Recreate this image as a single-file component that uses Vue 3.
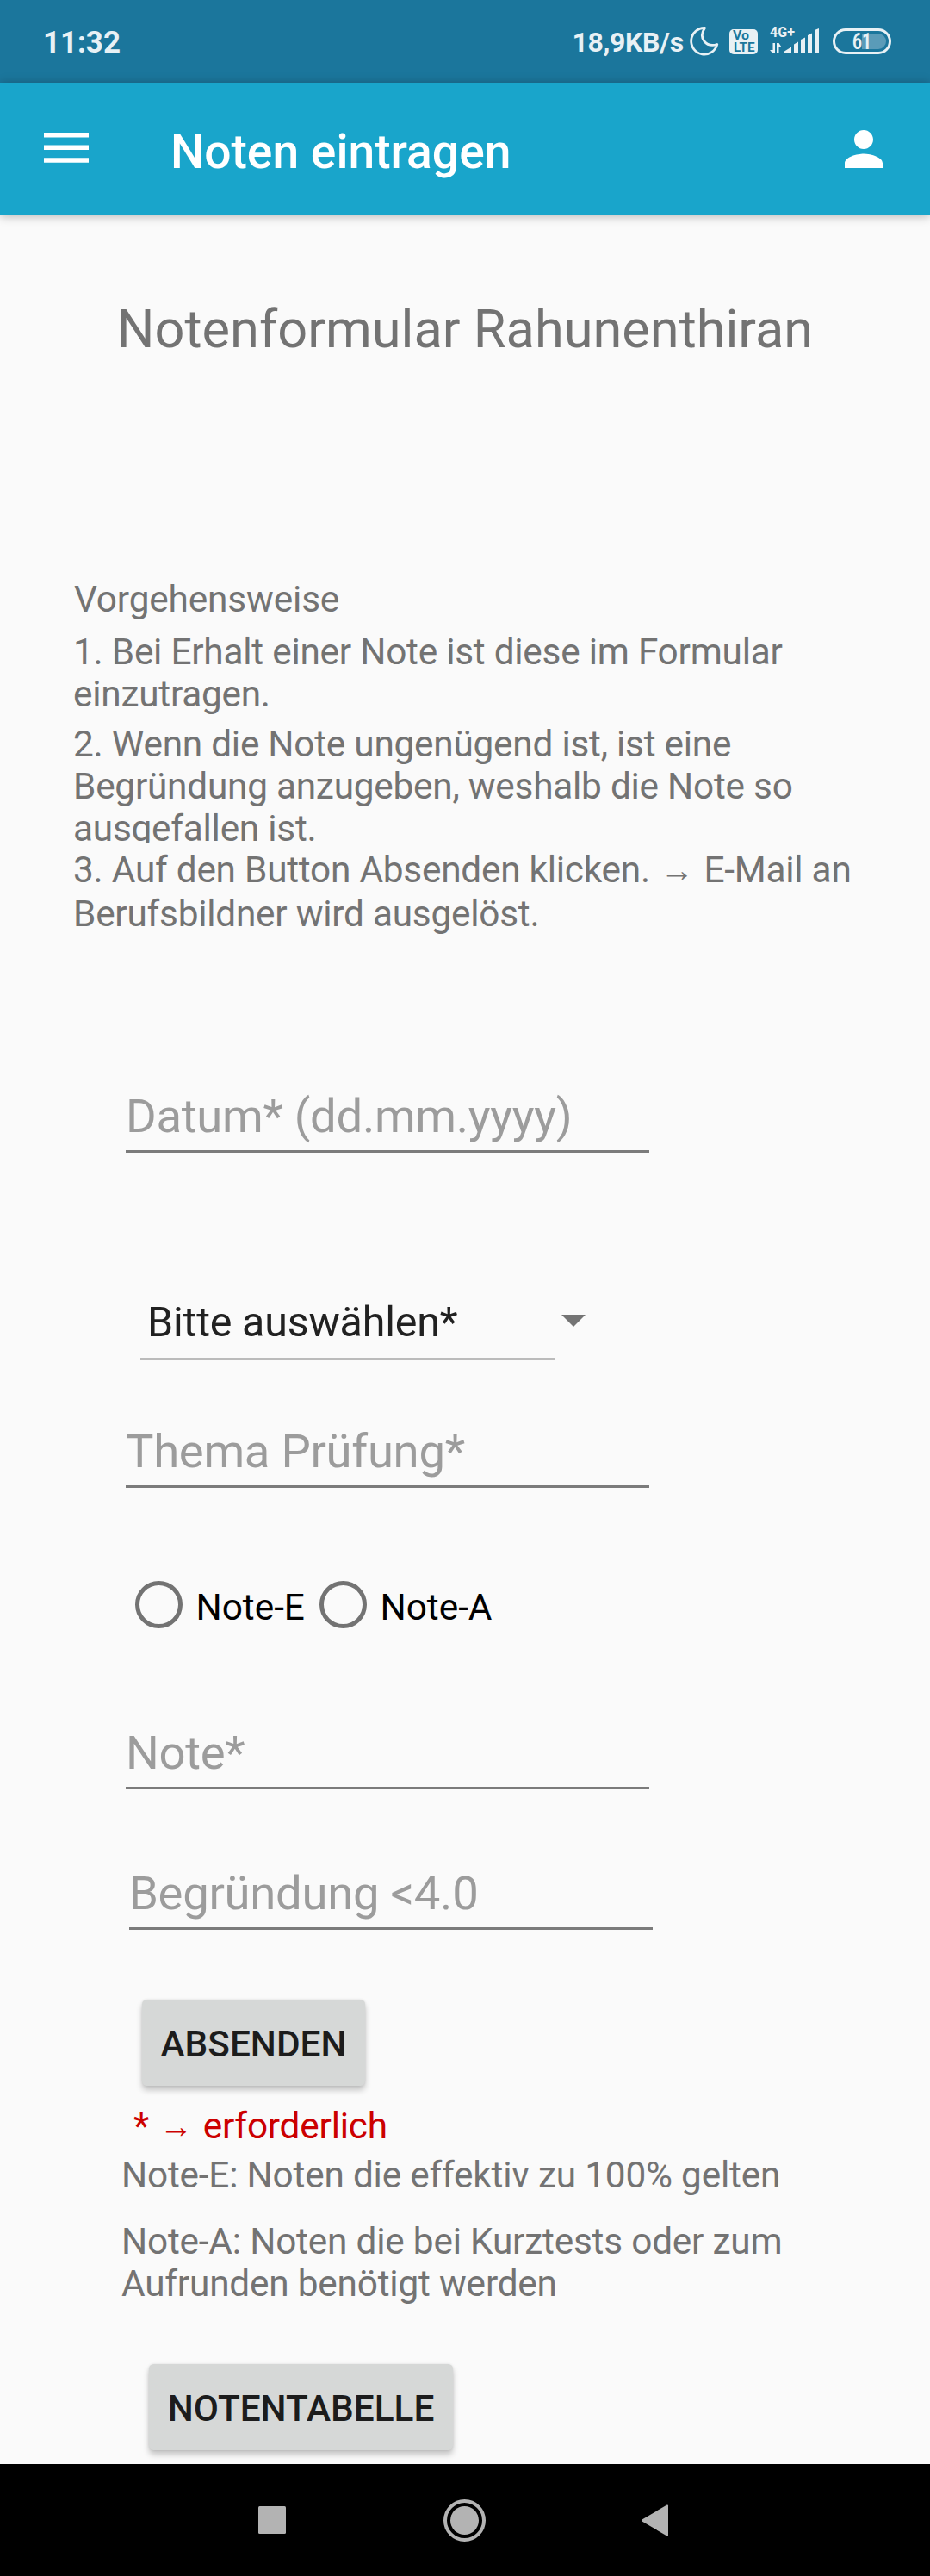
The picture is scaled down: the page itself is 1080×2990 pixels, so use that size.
<script setup>
const steps = [
  '1. Bei Erhalt einer Note ist diese im Formular einzutragen.',
  '2. Wenn die Note ungenügend ist, ist eine Begründung anzugeben, weshalb die Note so ausgefallen ist.'
]
const radios = ['Note-E', 'Note-A']
</script>

<template>
  <div class="screen">
    <div class="status">
      <span class="time">11:32</span>
      <div class="tray">
        <span class="speed">18,9KB/s</span>
        <svg class="tray-icons" width="248" height="40" viewBox="792 26 248 40">
          <path d="M818.500 32.500A15.300 15.300 0 1 0 832.800 51.500C820 55.500 810.500 44 818.500 32.500Z" fill="none" stroke="#e8f1f5" stroke-width="2.800" stroke-linejoin="round" />
          <rect x="847" y="34" width="33" height="29" rx="5" fill="#e8f1f5" />
          <text x="851" y="46" class="vo" textLength="19" lengthAdjust="spacingAndGlyphs">Vo</text>
          <text x="852" y="59.500" class="vo" textLength="24.500" lengthAdjust="spacingAndGlyphs">LTE</text>
          <text x="894" y="43" class="net" textLength="29">4G+</text>
          <g fill="#e8f1f5">
            <path d="M897.500 50h2.500v12h-2.500l-3.500-4h3.500ZM902 62V50h2.500l3 4.500h-3V62Z" />
            <path d="M911 62v-2.500l8-5V62ZM922 62V51.500l5-3V62ZM930 62V46l5-2.500V62ZM938 62V41l5-2.500V62ZM946 62V35l5-2V62Z" />
          </g>
          <rect x="968.500" y="34.500" width="65" height="27" rx="13.500" fill="none" stroke="#e8f1f5" stroke-width="3" />
          <path d="M1001 39h19a9 9 0 0 1 0 18h-19Z" fill="#5a9bb8" />
          <text x="990" y="57" class="batt" textLength="22" lengthAdjust="spacingAndGlyphs">61</text>
        </svg>
      </div>
    </div>

    <header class="bar">
      <svg class="menu" width="52" height="36" viewBox="0 0 52 36" fill="#fff">
        <path d="M0 0h52v5.500H0zM0 14.500h52V20H0zM0 29.300h52v5.500H0z" />
      </svg>
      <h1>Noten eintragen</h1>
      <svg class="person" width="44" height="44" viewBox="4 4 16 16" fill="#fff">
        <path d="M12 12c2.210 0 4-1.790 4-4s-1.790-4-4-4-4 1.790-4 4 1.790 4 4 4zm0 2c-2.670 0-8 1.340-8 4v2h16v-2c0-2.660-5.330-4-8-4z" />
      </svg>
    </header>

    <main>
      <h2>Notenformular Rahunenthiran</h2>

      <section class="guide">
        <p class="lead">Vorgehensweise</p>
        <p class="s1">{{ steps[0] }}</p>
        <p class="s2">{{ steps[1] }}</p>
        <p class="s3">3. Auf den Button Absenden klicken. <span class="arrow">→</span> E-Mail an Berufsbildner wird ausgelöst.</p>
      </section>

      <form>
        <div class="field date">Datum* (dd.mm.yyyy)</div>
        <div class="select">
          <div class="value">Bitte auswählen*</div>
          <svg width="28" height="14" viewBox="0 0 28 14"><path d="M0 0h28L14 14z" fill="#747474" /></svg>
        </div>
        <div class="field topic">Thema Prüfung*</div>
        <div class="radios">
          <label v-for="r in radios" :key="r"><i></i><span>{{ r }}</span></label>
        </div>
        <div class="field grade">Note*</div>
        <div class="field reason">Begründung &lt;4.0</div>
        <button type="button" class="send">ABSENDEN</button>
      </form>

      <section class="notes">
        <p class="req">* <span class="arrow">→</span> erforderlich</p>
        <p class="ne">Note-E: Noten die effektiv zu 100% gelten</p>
        <p class="na">Note-A: Noten die bei Kurztests oder zum Aufrunden benötigt werden</p>
      </section>
      <button type="button" class="table">NOTENTABELLE</button>
    </main>

    <nav>
      <svg width="480" height="52" viewBox="298 2900 480 52" fill="#b3b3b3">
        <rect x="300" y="2909" width="32" height="32" rx="1.500" />
        <circle cx="539.500" cy="2925.500" r="16.500" />
        <circle cx="539.500" cy="2925.500" r="22.500" fill="none" stroke="#b3b3b3" stroke-width="4" />
        <path d="M746 2924.300 774.500 2907.500q1.500-.5 1.500 1v34q0 1.500-1.500 1L746 2926.700q-1.500-1.200 0-2.400Z" />
      </svg>
    </nav>
  </div>
</template>

<style>
body { margin: 0; }
</style>

<style scoped>
.screen {
  width: 1080px;
  height: 2990px;
  display: flex;
  flex-direction: column;
  background: #fafafa;
  font-family: Roboto, sans-serif;
  color: #737373;
  overflow: hidden;
}
p, h1, h2 { margin: 0; font-weight: 400; }
.status {
  height: 96px;
  flex: none;
  box-sizing: border-box;
  padding: 0 40px 0 50px;
  display: flex;
  justify-content: space-between;
  background: #1b769c;
  color: #e8f1f5;
}
.time { font-size: 34.900px; line-height: 40px; font-weight: 700; margin-top: 30px; }
.tray { display: flex; align-items: flex-start; }
.speed { font-size: 32px; letter-spacing: -.350px; line-height: 38px; font-weight: 700; width: 127.500px; margin-top: 30px; white-space: nowrap; }
.tray-icons { margin-top: 26px; display: block; }
.vo { font: 700 14px Roboto, sans-serif; fill: #1b769c; }
.net { font: 700 16px Roboto, sans-serif; fill: #e8f1f5; }
.batt { font: 700 25px Roboto, sans-serif; fill: #e8f1f5; }
.bar {
  height: 154px;
  flex: none;
  box-sizing: border-box;
  padding: 0 55px 0 51px;
  display: flex;
  align-items: flex-start;
  background: #19a5cb;
  color: #fff;
  box-shadow: 0 1px 11px rgba(0, 0, 0, .28);
}
.menu { margin-top: 58px; }
.bar h1 { font-size: 55.200px; line-height: 64px; font-weight: 500; margin: 48px 0 0 95px; flex: 1; }
.person { margin-top: 55px; }
main { flex: 1; display: flex; flex-direction: column; align-items: flex-start; font-size: 42.350px; line-height: 49px; }
h2 { align-self: center; margin-top: 97px; font-size: 61.300px; line-height: 71px; white-space: nowrap; }
.guide { margin: 253px 0 0 85px; width: 920px; letter-spacing: -.240px; }
.lead { padding-left: 1px; letter-spacing: -.150px; }
.s1 { margin-top: 12px; width: 860px; }
.s2 { margin-top: 9px; width: 860px; height: 140px; overflow: hidden; }
.s3 { margin-top: 5px; line-height: 51px; height: 102px; }
.arrow { display: inline-block; width: 42px; text-align: center; font-family: "Liberation Serif", serif; font-size: 39px; line-height: 30px; vertical-align: 1px; }
form { display: flex; flex-direction: column; align-items: flex-start; margin-top: 177px; }
.field {
  box-sizing: border-box;
  width: 608px;
  height: 75px;
  margin-left: 146px;
  border-bottom: 3px solid #7b7b7b;
  font-size: 54.450px;
  line-height: 64px;
  letter-spacing: -.300px;
  color: #9c9c9c;
}
.select { display: flex; margin: 168px 0 0 163px; }
.value {
  box-sizing: border-box;
  width: 481px;
  height: 73px;
  padding-left: 8px;
  border-bottom: 3px solid #bbb;
  font-size: 48.400px;
  line-height: 57px;
  letter-spacing: -.200px;
  color: #212121;
}
.select svg { margin: 20px 0 0 8px; }
.topic { margin-top: 73px; }
.radios { display: flex; margin: 108px 0 0 156.500px; height: 56px; }
.radios label { display: flex; width: 214px; color: #000; }
.radios i { box-sizing: border-box; width: 55px; height: 55px; border: 5.500px solid #737373; border-radius: 50%; }
.radios span { margin: 6px 0 0 16px; }
.grade { margin-top: 111px; }
.reason { margin: 88px 0 0 150px; }
button {
  box-sizing: border-box;
  height: 100px;
  padding: 3px 0 0;
  border: 0;
  border-radius: 5.500px;
  background: #d6d8d7;
  box-shadow: 0 5px 7px rgba(0, 0, 0, .22), 0 0 3px rgba(0, 0, 0, .1);
  font: 500 42.350px/49px Roboto, sans-serif;
  color: #1c1c1c;
}
.send { width: 259px; margin: 81px 0 0 165px; }
.notes { margin: 22px 0 0 141px; width: 800px; letter-spacing: -.200px; }
.req { padding-left: 14px; height: 49px; color: #c00; }
.ne { margin-top: 8px; }
.na { margin-top: 28px; }
.table { width: 353px; margin: 69px 0 0 173px; }
nav { height: 130px; flex: none; display: flex; background: #000; }
nav svg { margin: 40px 0 0 298px; }
</style>
